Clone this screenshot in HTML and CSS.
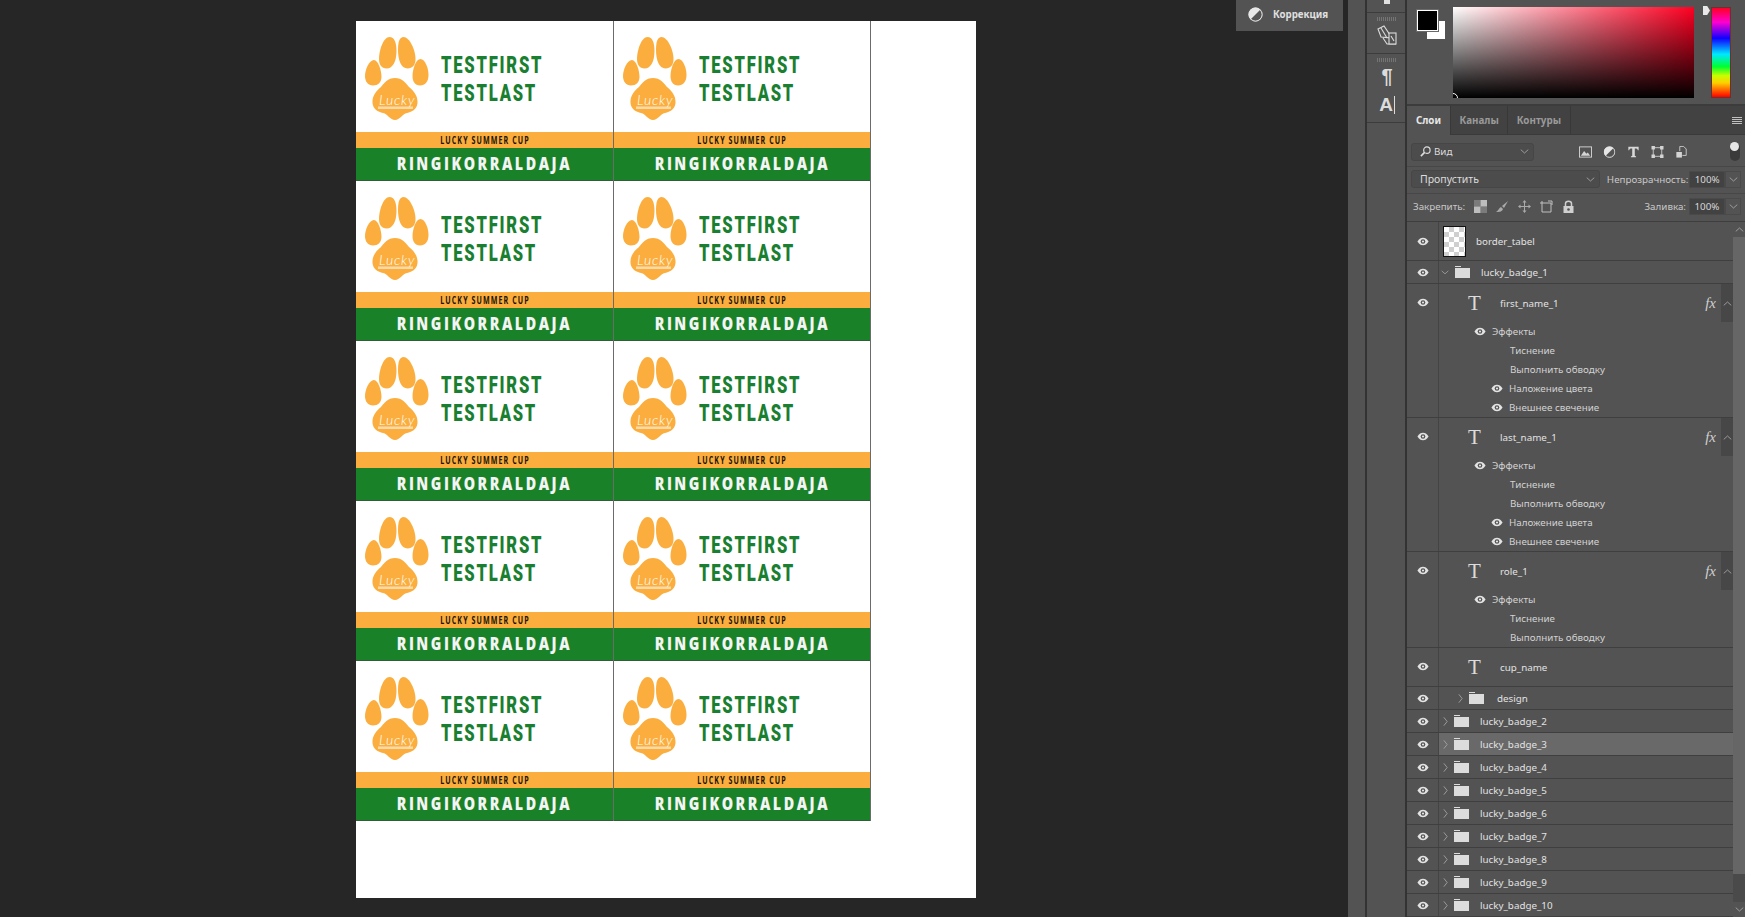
FILE: index.html
```html
<!DOCTYPE html>
<html lang="ru">
<head>
<meta charset="utf-8">
<title>Layers</title>
<link rel="stylesheet" href="styles.css">
</head>
<body>
<svg class="defs" width="0" height="0" aria-hidden="true">
  <symbol id="paw" viewBox="0 0 64 84">
    <g fill="#fbae3e">
      <path d="M24.500 0C29.500 0 31.500 6 31.500 14C31.500 24 28 31.500 21.500 31.500C16.500 31.500 14 27.500 14 22C14 13 18.500 0 24.500 0Z"/>
      <path d="M38.500 0C44.500 0 50.500 13 50.500 22C50.500 28 47.500 31.500 42.500 31.500C36 31.500 33 23 33 13C33 5 34.500 0 38.500 0Z"/>
      <path d="M9 23C13 23 16.500 33 16.500 40C16.500 45 13 48.500 8 48.500C3 48.500 0 44.500 0 39C0 33 4 23 9 23Z"/>
      <path d="M55.500 22C60 22 63.500 31 63.500 38C63.500 44.500 60 48.500 55 48.500C50 48.500 47.500 44.500 47.500 39C47.500 33 50.500 22 55.500 22Z"/>
      <path d="M30 41C37 41 41 46 44 50C49 54 53 59 52.500 66C52 72 47 75 42 76C37 77 35 83 30 83C25 83 23 77 18 76C13 75 8 72 7.500 66C7 59 11 54 16 50C19 46 23 41 30 41Z"/>
    </g>
    <rect x="13" y="69.500" width="35" height="2.500" fill="#fff" opacity=".55"/>
  </symbol>
  <symbol id="eye" viewBox="0 0 14 10">
    <path d="M0.500 5C2.500 1.800 4.600 .6 7 .6S11.500 1.800 13.500 5C11.500 8.200 9.400 9.400 7 9.400S2.500 8.200 .5 5Z" fill="#e4e4e4"/>
    <circle cx="7" cy="5" r="2.700" fill="#535353"/>
    <circle cx="7" cy="5" r="1.300" fill="#e4e4e4"/>
  </symbol>
  <symbol id="folder" viewBox="0 0 15 12">
    <path d="M0 0H6V1H0ZM0 2H15V12H0Z" fill="#dcdcdc"/>
  </symbol>
  <symbol id="chev-r" viewBox="0 0 6 12">
    <path d="M1 1L5 6L1 11" fill="none" stroke="#a8a8a8"/>
  </symbol>
  <symbol id="chev-d" viewBox="0 0 12 6">
    <path d="M1 .5L6 5L11 .5" fill="none" stroke="#b5b5b5"/>
  </symbol>
  <symbol id="chev-u" viewBox="0 0 12 6">
    <path d="M1 5.500L6 1L11 5.500" fill="none" stroke="#b5b5b5"/>
  </symbol>
  <symbol id="half" viewBox="0 0 16 16">
    <circle cx="8" cy="8" r="7.500" fill="#e6e6e6"/>
    <path d="M13.300 2.700A7.500 7.500 0 0 1 2.700 13.300Z" fill="#535353"/>
    <circle cx="8" cy="8" r="7" fill="none" stroke="#e6e6e6"/>
  </symbol>
</svg>

<div class="app">
  <main class="workspace">
    <div class="sheet">
      <div class="badges">
        <article class="badge"><div class="badge-top"><svg class="paw" viewBox="0 0 64 84"><use href="#paw"/><text x="14" y="68" class="paw-word">Lucky</text></svg><div class="names"><div>TESTFIRST</div><div>TESTLAST</div></div></div><div class="cup"><span>LUCKY SUMMER CUP</span></div><div class="role"><span>RINGIKORRALDAJA</span></div></article>
        <article class="badge"><div class="badge-top"><svg class="paw" viewBox="0 0 64 84"><use href="#paw"/><text x="14" y="68" class="paw-word">Lucky</text></svg><div class="names"><div>TESTFIRST</div><div>TESTLAST</div></div></div><div class="cup"><span>LUCKY SUMMER CUP</span></div><div class="role"><span>RINGIKORRALDAJA</span></div></article>
        <article class="badge"><div class="badge-top"><svg class="paw" viewBox="0 0 64 84"><use href="#paw"/><text x="14" y="68" class="paw-word">Lucky</text></svg><div class="names"><div>TESTFIRST</div><div>TESTLAST</div></div></div><div class="cup"><span>LUCKY SUMMER CUP</span></div><div class="role"><span>RINGIKORRALDAJA</span></div></article>
        <article class="badge"><div class="badge-top"><svg class="paw" viewBox="0 0 64 84"><use href="#paw"/><text x="14" y="68" class="paw-word">Lucky</text></svg><div class="names"><div>TESTFIRST</div><div>TESTLAST</div></div></div><div class="cup"><span>LUCKY SUMMER CUP</span></div><div class="role"><span>RINGIKORRALDAJA</span></div></article>
        <article class="badge"><div class="badge-top"><svg class="paw" viewBox="0 0 64 84"><use href="#paw"/><text x="14" y="68" class="paw-word">Lucky</text></svg><div class="names"><div>TESTFIRST</div><div>TESTLAST</div></div></div><div class="cup"><span>LUCKY SUMMER CUP</span></div><div class="role"><span>RINGIKORRALDAJA</span></div></article>
        <article class="badge"><div class="badge-top"><svg class="paw" viewBox="0 0 64 84"><use href="#paw"/><text x="14" y="68" class="paw-word">Lucky</text></svg><div class="names"><div>TESTFIRST</div><div>TESTLAST</div></div></div><div class="cup"><span>LUCKY SUMMER CUP</span></div><div class="role"><span>RINGIKORRALDAJA</span></div></article>
        <article class="badge"><div class="badge-top"><svg class="paw" viewBox="0 0 64 84"><use href="#paw"/><text x="14" y="68" class="paw-word">Lucky</text></svg><div class="names"><div>TESTFIRST</div><div>TESTLAST</div></div></div><div class="cup"><span>LUCKY SUMMER CUP</span></div><div class="role"><span>RINGIKORRALDAJA</span></div></article>
        <article class="badge"><div class="badge-top"><svg class="paw" viewBox="0 0 64 84"><use href="#paw"/><text x="14" y="68" class="paw-word">Lucky</text></svg><div class="names"><div>TESTFIRST</div><div>TESTLAST</div></div></div><div class="cup"><span>LUCKY SUMMER CUP</span></div><div class="role"><span>RINGIKORRALDAJA</span></div></article>
        <article class="badge"><div class="badge-top"><svg class="paw" viewBox="0 0 64 84"><use href="#paw"/><text x="14" y="68" class="paw-word">Lucky</text></svg><div class="names"><div>TESTFIRST</div><div>TESTLAST</div></div></div><div class="cup"><span>LUCKY SUMMER CUP</span></div><div class="role"><span>RINGIKORRALDAJA</span></div></article>
        <article class="badge"><div class="badge-top"><svg class="paw" viewBox="0 0 64 84"><use href="#paw"/><text x="14" y="68" class="paw-word">Lucky</text></svg><div class="names"><div>TESTFIRST</div><div>TESTLAST</div></div></div><div class="cup"><span>LUCKY SUMMER CUP</span></div><div class="role"><span>RINGIKORRALDAJA</span></div></article>
      </div>
    </div>
    <div class="float-btn"><svg class="float-icon"><use href="#half"/></svg><span>Коррекция</span></div>
  </main>

  <div class="collapsed-strip"></div>

  <aside class="tool-strip">
    <div class="tool-group tool-group-a"><span class="tool-stub"></span></div>
    <div class="tool-group tool-group-b">
      <span class="grip"></span>
      <svg class="tool-icon" viewBox="0 0 20 20"><g fill="none" stroke="#dcdcdc" stroke-width="1.100"><path d="M1 4L7 1L15 13L4 12Z"/><path d="M4 3L10 13"/><path d="M6 13L10 19H19"/><rect x="12" y="8" width="7" height="11" fill="#535353"/><path d="M14 11L17 16"/></g></svg>
    </div>
    <div class="tool-group tool-group-c">
      <span class="grip"></span>
      <span class="pilcrow">¶</span>
      <span class="a-cursor">A<i></i></span>
    </div>
  </aside>

  <section class="panels">
    <div class="color-panel">
      <div class="swatches"><span class="swatch-bg"></span><span class="swatch-fg"></span></div>
      <div class="spectrum"><span class="picker"></span></div>
      <div class="hue"><span class="hue-mark"></span></div>
    </div>

    <div class="tabs">
      <span class="tab tab-active">Слои</span>
      <span class="tab">Каналы</span>
      <span class="tab">Контуры</span>
      <span class="tab-fill"><svg class="menu-icon" viewBox="0 0 10 7"><path d="M0 .5H10M0 2.500H10M0 4.500H10M0 6.500H10" stroke="#c0c0c0"/></svg></span>
    </div>

    <div class="filter-row">
      <div class="select select-filter">
        <svg class="search-icon" viewBox="0 0 12 12"><circle cx="7.500" cy="4.500" r="3.500" fill="none" stroke="#ddd" stroke-width="1.300"/><path d="M5 7L1 11" stroke="#ddd" stroke-width="1.800"/></svg>
        <span class="select-label">Вид</span>
        <svg class="chev"><use href="#chev-d"/></svg>
      </div>
      <div class="filter-icons">
        <svg class="ficon" viewBox="0 0 14 12"><rect x=".5" y=".5" width="13" height="11" fill="none" stroke="#d4d4d4"/><path d="M2 10L5.500 5L8 8L9.500 6.500L12 10Z" fill="#d4d4d4"/></svg>
        <svg class="ficon" viewBox="0 0 16 16"><use href="#half"/></svg>
        <svg class="ficon" viewBox="0 0 14 14"><path d="M1 1H13V5H12C11.500 3 11 2.800 8.500 2.800V11.500L10 12.300V13H4V12.300L5.500 11.500V2.800C3 2.800 2.500 3 2 5H1Z" fill="#d8d8d8"/></svg>
        <svg class="ficon" viewBox="0 0 14 14"><rect x="2" y="2" width="10" height="10" fill="none" stroke="#d4d4d4"/><path d="M0 0H4V4H0ZM10 0H14V4H10ZM0 10H4V14H0ZM10 10H14V14H10Z" fill="#d4d4d4"/></svg>
        <svg class="ficon" viewBox="0 0 12 14"><path d="M4 6V.5H8.500L11.500 3.500V11H7" fill="none" stroke="#d4d4d4"/><rect x="0" y="7" width="6.500" height="6.500" fill="#d4d4d4"/></svg>
      </div>
      <span class="toggle"><i></i></span>
    </div>

    <div class="blend-row">
      <div class="select select-blend">
        <span class="select-label">Пропустить</span>
        <svg class="chev"><use href="#chev-d"/></svg>
      </div>
      <span class="field-label">Непрозрачность:</span>
      <span class="num">100%</span>
      <span class="num-arrow"><svg class="chev"><use href="#chev-d"/></svg></span>
    </div>

    <div class="lock-row">
      <span class="field-label lock-label">Закрепить:</span>
      <div class="lock-icons">
        <svg class="licon" viewBox="0 0 12 12"><path d="M0 0H6V6H12V12H6V6H0Z" fill="#7b7b7b"/><path d="M6 0H12V6H6ZM0 6H6V12H0Z" fill="#bdbdbd"/></svg>
        <svg class="licon" viewBox="0 0 13 13"><path d="M12 1L6 6L8 8Z" fill="#a9a9a9"/><path d="M5 7L7 9C6 12 3 12 0 12C2 11 3 8 5 7Z" fill="#a9a9a9"/></svg>
        <svg class="licon" viewBox="0 0 13 13"><path d="M6.500 0L8.500 2.500H4.500ZM6.500 13L4.500 10.500H8.500ZM0 6.500L2.500 4.500V8.500ZM13 6.500L10.500 8.500V4.500ZM6 2H7V11H6ZM2 6H11V7H2Z" fill="#a9a9a9"/></svg>
        <svg class="licon" viewBox="0 0 13 13"><path d="M0 3H11V12H2V1" fill="none" stroke="#c0c0c0"/><path d="M8 1H12V5" fill="none" stroke="#c0c0c0"/></svg>
        <svg class="licon" viewBox="0 0 12 13"><path d="M3 6V3.500C3 .5 9 .5 9 3.500V6" fill="none" stroke="#d0d0d0" stroke-width="1.500"/><path d="M1 6H11V13H1Z" fill="#d0d0d0"/><circle cx="6" cy="9.500" r="1.300" fill="#535353"/></svg>
      </div>
      <span class="field-label fill-label">Заливка:</span>
      <span class="num">100%</span>
      <span class="num-arrow"><svg class="chev"><use href="#chev-d"/></svg></span>
    </div>

    <div class="layers-wrap">
      <div class="layers">
        <div class="layer layer-39">
          <span class="vis"><svg class="eye"><use href="#eye"/></svg></span>
          <span class="thumb"></span><span class="lname lname-thumb">border_tabel</span>
        </div>
        <div class="layer layer-23">
          <span class="vis"><svg class="eye"><use href="#eye"/></svg></span>
          <svg class="chev-open"><use href="#chev-d"/></svg><svg class="folder"><use href="#folder"/></svg><span class="lname">lucky_badge_1</span>
        </div>

        <div class="layer-block">
          <span class="vis vis-tall"><svg class="eye"><use href="#eye"/></svg></span>
          <div class="block-body">
            <div class="text-row"><span class="t-icon">T</span><span class="lname">first_name_1</span><span class="fx">fx</span><span class="fx-toggle"><svg class="chev-up"><use href="#chev-u"/></svg></span></div>
            <div class="fx-row fx-head"><svg class="eye"><use href="#eye"/></svg><span>Эффекты</span></div>
            <div class="fx-row fx-item">Тиснение</div>
            <div class="fx-row fx-item">Выполнить обводку</div>
            <div class="fx-row fx-item fx-on"><svg class="eye"><use href="#eye"/></svg><span>Наложение цвета</span></div>
            <div class="fx-row fx-item fx-on"><svg class="eye"><use href="#eye"/></svg><span>Внешнее свечение</span></div>
          </div>
        </div>

        <div class="layer-block">
          <span class="vis vis-tall"><svg class="eye"><use href="#eye"/></svg></span>
          <div class="block-body">
            <div class="text-row"><span class="t-icon">T</span><span class="lname">last_name_1</span><span class="fx">fx</span><span class="fx-toggle"><svg class="chev-up"><use href="#chev-u"/></svg></span></div>
            <div class="fx-row fx-head"><svg class="eye"><use href="#eye"/></svg><span>Эффекты</span></div>
            <div class="fx-row fx-item">Тиснение</div>
            <div class="fx-row fx-item">Выполнить обводку</div>
            <div class="fx-row fx-item fx-on"><svg class="eye"><use href="#eye"/></svg><span>Наложение цвета</span></div>
            <div class="fx-row fx-item fx-on"><svg class="eye"><use href="#eye"/></svg><span>Внешнее свечение</span></div>
          </div>
        </div>

        <div class="layer-block">
          <span class="vis vis-tall"><svg class="eye"><use href="#eye"/></svg></span>
          <div class="block-body">
            <div class="text-row"><span class="t-icon">T</span><span class="lname">role_1</span><span class="fx">fx</span><span class="fx-toggle"><svg class="chev-up"><use href="#chev-u"/></svg></span></div>
            <div class="fx-row fx-head"><svg class="eye"><use href="#eye"/></svg><span>Эффекты</span></div>
            <div class="fx-row fx-item">Тиснение</div>
            <div class="fx-row fx-item">Выполнить обводку</div>
          </div>
        </div>

        <div class="layer-block">
          <span class="vis vis-tall"><svg class="eye"><use href="#eye"/></svg></span>
          <div class="block-body">
            <div class="text-row"><span class="t-icon">T</span><span class="lname">cup_name</span></div>
          </div>
        </div>

        <div class="layer layer-23 layer-nested">
          <span class="vis"><svg class="eye"><use href="#eye"/></svg></span>
          <svg class="chev-closed"><use href="#chev-r"/></svg><svg class="folder"><use href="#folder"/></svg><span class="lname">design</span>
        </div>
        <div class="layer layer-23"><span class="vis"><svg class="eye"><use href="#eye"/></svg></span><svg class="chev-closed"><use href="#chev-r"/></svg><svg class="folder"><use href="#folder"/></svg><span class="lname">lucky_badge_2</span></div>
        <div class="layer layer-23 layer-selected"><span class="vis"><svg class="eye"><use href="#eye"/></svg></span><svg class="chev-closed"><use href="#chev-r"/></svg><svg class="folder"><use href="#folder"/></svg><span class="lname">lucky_badge_3</span></div>
        <div class="layer layer-23"><span class="vis"><svg class="eye"><use href="#eye"/></svg></span><svg class="chev-closed"><use href="#chev-r"/></svg><svg class="folder"><use href="#folder"/></svg><span class="lname">lucky_badge_4</span></div>
        <div class="layer layer-23"><span class="vis"><svg class="eye"><use href="#eye"/></svg></span><svg class="chev-closed"><use href="#chev-r"/></svg><svg class="folder"><use href="#folder"/></svg><span class="lname">lucky_badge_5</span></div>
        <div class="layer layer-23"><span class="vis"><svg class="eye"><use href="#eye"/></svg></span><svg class="chev-closed"><use href="#chev-r"/></svg><svg class="folder"><use href="#folder"/></svg><span class="lname">lucky_badge_6</span></div>
        <div class="layer layer-23"><span class="vis"><svg class="eye"><use href="#eye"/></svg></span><svg class="chev-closed"><use href="#chev-r"/></svg><svg class="folder"><use href="#folder"/></svg><span class="lname">lucky_badge_7</span></div>
        <div class="layer layer-23"><span class="vis"><svg class="eye"><use href="#eye"/></svg></span><svg class="chev-closed"><use href="#chev-r"/></svg><svg class="folder"><use href="#folder"/></svg><span class="lname">lucky_badge_8</span></div>
        <div class="layer layer-23"><span class="vis"><svg class="eye"><use href="#eye"/></svg></span><svg class="chev-closed"><use href="#chev-r"/></svg><svg class="folder"><use href="#folder"/></svg><span class="lname">lucky_badge_9</span></div>
        <div class="layer layer-23"><span class="vis"><svg class="eye"><use href="#eye"/></svg></span><svg class="chev-closed"><use href="#chev-r"/></svg><svg class="folder"><use href="#folder"/></svg><span class="lname">lucky_badge_10</span></div>
      </div>
      <div class="scrollbar">
        <span class="sb-arrow"><svg class="chev-up"><use href="#chev-u"/></svg></span>
        <span class="sb-thumb"></span>
        <span class="sb-arrow sb-arrow-down"><svg class="chev-up"><use href="#chev-d"/></svg></span>
      </div>
    </div>
  </section>
</div>
</body>
</html>
```

FILE: styles.css
```css
* { box-sizing: border-box; }
html, body { margin: 0; height: 100%; overflow: hidden; }
body { background: #262626; font-family: "Noto Sans", "Open Sans", sans-serif; font-size: 9.800px; color: #dcdcdc; }
.defs { position: absolute; }
.app { display: flex; width: 1745px; height: 917px; overflow: hidden; }

/* Document area */
.workspace { position: relative; width: 1348px; flex: none; background: #262626; padding: 21px 0 0 356px; }
.sheet { width: 620px; height: 877px; background: #fff; }
.badges { display: grid; grid-template-columns: 258px 257px; grid-auto-rows: 160px; }
.badge { display: flex; flex-direction: column; border-right: 1px solid #6b6b6b; }
.badge-top { height: 111px; display: flex; align-items: flex-start; padding: 16px 0 0 9px; flex: none; }
.paw { width: 64px; height: 84px; flex: none; }
.paw-word { font-family: "Lato", "Open Sans", sans-serif; font-weight: 300; font-style: italic; font-size: 14px; fill: #fff; letter-spacing: .8px; }
.names { margin: 14px 0 0 12px; color: #1a7f30; font-family: Roboto, sans-serif; font-weight: 900; font-size: 24px; line-height: 28.200px; letter-spacing: 2.600px; }
.names div { transform: scaleX(.69); transform-origin: left center; white-space: nowrap; }
.cup { height: 16px; flex: none; background: #fbae3e; color: #1d1405; text-align: center; font-family: "Open Sans", sans-serif; font-weight: 700; font-size: 10px; line-height: 17px; letter-spacing: 1.500px; white-space: nowrap; }
.cup span { display: inline-block; transform: scaleX(.71); }
.role { height: 33px; flex: none; background: #198228; border-bottom: 1px solid #2f5d36; color: #f4f4f4; text-align: center; font-family: "Open Sans", sans-serif; font-weight: 800; font-size: 17px; line-height: 31px; letter-spacing: 3px; white-space: nowrap; }
.role span { display: inline-block; transform: scaleX(.84); }

.float-btn { position: absolute; left: 1236px; top: 0; width: 107px; height: 31px; background: #535353; display: flex; align-items: center; padding: 0 0 2px 12px; gap: 10px; font-weight: 700; font-size: 9.700px; color: #e0e0e0; }
.float-icon { width: 15px; height: 15px; }

/* Side strips */
.collapsed-strip { width: 19px; flex: none; background: #535353; border-right: 2px solid #333; }
.tool-strip { width: 40px; flex: none; background: #535353; border-right: 2px solid #333; display: flex; flex-direction: column; }
.tool-group { border-bottom: 1px solid #3c3c3c; display: flex; flex-direction: column; align-items: center; padding-left: 2px; }
.tool-group-a { height: 13px; }
.tool-stub { width: 6px; height: 4px; background: #e0e0e0; }
.tool-group-b { height: 41px; padding-top: 4px; }
.tool-group-c { height: 69px; padding-top: 4px; }
.grip { width: 20px; height: 4px; flex: none; background: repeating-linear-gradient(90deg, #747474 0 1px, transparent 1px 2px); }
.tool-icon { width: 20px; height: 20px; margin-top: 4px; }
.pilcrow { font-family: "Liberation Sans", sans-serif; font-weight: 700; font-size: 20px; line-height: 24px; margin-top: 2px; color: #dcdcdc; }
.a-cursor { font-family: "Liberation Sans", sans-serif; font-weight: 700; font-size: 19px; line-height: 24px; color: #dcdcdc; display: flex; align-items: center; margin-top: 5px; }
.a-cursor i { width: 1px; height: 18px; background: #dcdcdc; margin-left: 1px; }

/* Panels */
.panels { width: 338px; flex: none; background: #535353; display: flex; flex-direction: column; }
.color-panel { height: 106px; flex: none; display: flex; padding: 7px 16px 0 10px; border-bottom: 2px solid #3c3c3c; }
.swatches { position: relative; width: 36px; height: 35px; flex: none; }
.swatch-fg { position: absolute; left: 0; top: 3px; width: 21px; height: 21px; background: #000; border: 1px solid #fff; outline: 1px solid #6a6a6a; }
.swatch-bg { position: absolute; left: 10px; top: 14px; width: 18px; height: 18px; background: #fff; }
.spectrum { position: relative; width: 241px; height: 91px; flex: none; background: linear-gradient(to top, #000, rgba(0,0,0,0)), linear-gradient(to right, #fff, #ff0022); }
.picker { position: absolute; left: -5px; bottom: -5px; width: 10px; height: 10px; border: 1px solid #fff; border-radius: 50%; clip-path: inset(0 0 5px 5px); }
.hue { position: relative; width: 20px; height: 91px; margin-left: 17px; flex: none; border: 1px solid #6b3030; background: linear-gradient(to bottom, #ff0022 0, #ff00d0 16%, #1000ff 34%, #00e8ff 52%, #00ff30 66%, #c8ff00 76%, #ffd000 84%, #ff0000 100%); }
.hue-mark { position: absolute; left: -9px; top: -2px; width: 7px; height: 9px; background: #e8e8e8; clip-path: polygon(0 0, 60% 0, 100% 50%, 60% 100%, 0 100%); }

.tabs { height: 29px; flex: none; display: flex; background: #424242; border-bottom: 1px solid #3a3a3a; font-weight: 700; font-size: 9.800px; color: #9a9a9a; }
.tab { display: flex; align-items: center; justify-content: center; padding: 0 8.500px; border-right: 1px solid #383838; height: 100%; }
.tab-active { background: #535353; color: #e8e8e8; width: 44px; height: 29px; }
.tab-fill { flex: 1; display: flex; align-items: center; justify-content: flex-end; padding-right: 3px; }
.menu-icon { width: 10px; height: 7px; }

.filter-row, .blend-row, .lock-row { flex: none; display: flex; align-items: center; border-bottom: 1px solid #474747; }
.filter-row { height: 32px; padding: 2px 0 0 4px; }
.blend-row { height: 27px; padding: 0 0 2px 4px; }
.lock-row { height: 28px; padding: 0 0 2px 6px; border-bottom: 1px solid #3e3e3e; }
.select { display: flex; align-items: center; height: 18px; border: 1px solid #464646; border-radius: 3px; background: #4c4c4c; padding: 0 4px 0 8px; color: #dcdcdc; }
.select-filter { width: 123px; }
.select-blend { width: 190px; font-size: 10.500px; }
.select-label { flex: 1; }
.search-icon { width: 11px; height: 11px; margin-right: 3px; }
.chev { width: 9px; height: 5px; }
.filter-icons { display: flex; align-items: center; margin-left: 45px; gap: 11px; }
.ficon { width: 13px; height: 12px; }
.toggle { width: 10px; height: 18px; margin-left: 42px; border-radius: 5px; background: #3b3b3b; display: block; }
.toggle i { display: block; width: 9px; height: 9px; margin-top: -1px; border-radius: 50%; background: #e8e8e8; }
.field-label { color: #c8c8c8; }
.blend-row .field-label { margin-left: 7px; width: 83px; white-space: nowrap; }
.num { width: 36px; height: 17px; background: #424242; border: 1px solid #4a4a4a; color: #d8d8d8; display: flex; align-items: center; justify-content: center; }
.num-arrow { width: 16px; height: 17px; border: 1px solid #4a4a4a; display: flex; align-items: center; justify-content: center; }
.lock-label { width: 61px; }
.lock-icons { display: flex; align-items: center; gap: 9px; }
.licon { width: 13px; height: 13px; }
.fill-label { margin-left: auto; margin-right: 3px; }
.lock-row .num-arrow, .blend-row .num-arrow { margin-right: 4px; }

/* Layers list */
.layers-wrap { flex: 1; display: flex; min-height: 0; }
.layers { flex: 1; display: flex; flex-direction: column; min-width: 0; }
.layer { display: flex; align-items: center; border-bottom: 1px solid #3f3f3f; flex: none; }
.layer-39 { height: 39px; }
.layer-23 { height: 23px; }
.vis { width: 32px; flex: none; align-self: stretch; display: flex; align-items: center; justify-content: center; border-right: 1px solid #444; }
.vis-tall { align-items: flex-start; padding-top: 14px; }
.eye { width: 12px; height: 9px; flex: none; }
.thumb { width: 23px; height: 31px; margin-left: 4px; border: 1px solid #111; background: #fff conic-gradient(#cfcfcf 25%, #fff 0 50%, #cfcfcf 0 75%, #fff 0) 0 0 / 10px 10px; flex: none; }
.lname { color: #e2e2e2; white-space: nowrap; }
.lname-thumb { margin-left: 10px; }
.chev-open { width: 8px; height: 5px; margin-left: 2px; flex: none; }
.chev-closed { width: 5px; height: 11px; margin-left: 4px; flex: none; }
.folder { width: 15px; height: 12px; margin-left: 6px; flex: none; }
.layer .folder + .lname { margin-left: 11px; }
.layer-nested .chev-closed { margin-left: 19px; }
.layer-nested .folder + .lname { margin-left: 13px; }
.layer-selected { background: linear-gradient(to right, #535353 32px, #696969 32px); }

.layer-block { display: flex; border-bottom: 1px solid #3f3f3f; flex: none; }
.block-body { flex: 1; min-width: 0; }
.text-row { height: 38px; display: flex; align-items: center; padding-left: 29px; }
.t-icon { width: 32px; font-family: "Liberation Serif", serif; font-size: 21px; line-height: 1; color: #dcdcdc; flex: none; }
.fx { margin-left: auto; margin-right: 5px; font-family: "Liberation Serif", serif; font-style: italic; font-size: 15px; color: #cfcfcf; }
.fx-toggle { width: 12px; align-self: stretch; background: #474747; display: flex; align-items: center; justify-content: center; }
.chev-up { width: 9px; height: 5px; }
.fx-row { height: 19px; display: flex; align-items: center; color: #d2d2d2; }
.fx-head { padding-left: 35px; gap: 6px; }
.fx-item { padding-left: 71px; }
.fx-on { padding-left: 52px; gap: 6px; }

.scrollbar { width: 12px; flex: none; display: flex; flex-direction: column; background: #4a4a4a; }
.sb-arrow { height: 15px; flex: none; display: flex; align-items: center; justify-content: center; background: #535353; }
.sb-thumb { flex: 1; max-height: 637px; background: #666; }
.sb-arrow-down { margin-top: auto; }
```
